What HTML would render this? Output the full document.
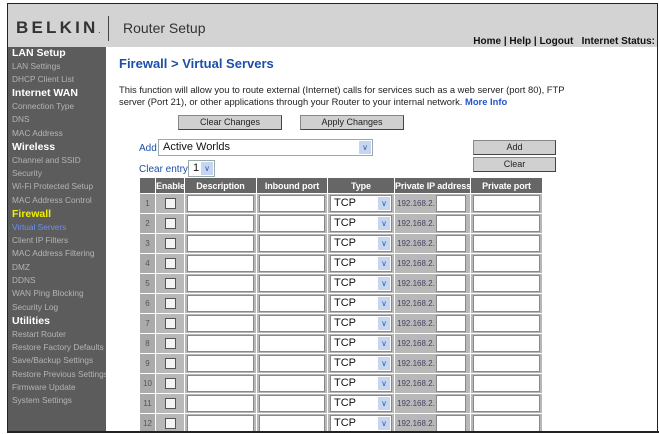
<!DOCTYPE html>
<html><head><style>
*{margin:0;padding:0;box-sizing:border-box}
body{width:659px;height:434px;background:#fff;font-family:"Liberation Sans",Arial,sans-serif;position:relative;overflow:hidden}
.frame{position:absolute;left:7px;top:3px;width:651px;height:430px;border:1px solid #222;border-bottom:2px solid #222}
.hdr{position:absolute;left:8px;top:4px;width:649px;height:43px;background:#d3d3d3}
.logo{position:absolute;left:16px;top:18px;font-size:17px;font-weight:bold;letter-spacing:3.2px;color:#333}
.vl{position:absolute;left:108px;top:16px;width:1px;height:25px;background:#444}
.rs{position:absolute;left:123px;top:20px;font-size:14px;color:#333}
.tr{position:absolute;right:4px;top:36px;font-size:10px;font-weight:bold;color:#111;white-space:nowrap}
.side{position:absolute;left:8px;top:47px;width:98px;height:385px;background:#5c5c5c;overflow:hidden}
.side div{position:absolute;left:4px;font-size:8.3px;color:#b4b4b4;white-space:nowrap}
.side .h{font-size:10.5px;font-weight:bold;color:#fff}
.side .y{color:#f0f000}
.side .b{color:#6d8ff0}
.title{position:absolute;left:119px;top:56px;font-size:13px;font-weight:bold;color:#1c4fa8}
.desc{position:absolute;left:119px;top:84px;width:540px;font-size:9.4px;line-height:12px;color:#222}
.desc a{color:#2255cc;font-weight:bold;text-decoration:none}
.btn{position:absolute;height:15px;background:#d0d0d0;border:1px solid #888;border-right-color:#444;border-bottom-color:#444;font-size:9px;text-align:center;line-height:13px;color:#222}
.lbl{position:absolute;font-size:10px;color:#1c4fa8;white-space:nowrap}
.sel{position:absolute;background:#fff;border:1px solid #9aa;font-size:11px;color:#111;padding-left:4px;line-height:15px}
.arr{position:absolute;right:1px;top:1px;width:12px;bottom:1px;background:#c6d6f0;color:#3b5fa8;font-size:8px;text-align:center;line-height:13px}
table{position:absolute;left:139px;top:177px;border-collapse:separate;border-spacing:1px;background:#fff;table-layout:fixed;width:404px}
td,th{padding:0;overflow:hidden;white-space:nowrap}
th{background:#666;color:#fff;font-size:9px;height:15px;font-weight:bold;letter-spacing:-0.1px}
td{background:#b8b8b8;height:19px;font-size:9px;color:#555;position:relative}
td.n{background:#aaa;text-align:center;color:#555;font-size:8px}
.ib{display:block;margin:0 auto;background:#fff;border:1px solid #888;height:17px}
.cb{display:block;margin:0 auto;width:11px;height:11px;border:1px solid #555;background:#f4f4f4}
.tsel{position:relative;margin-left:2px;width:62px;height:17px;background:#fff;border:1px solid #888;font-size:11px;color:#111;padding-left:3px;line-height:15px}
.ip{display:flex;align-items:center;padding-left:2px;color:#446;font-size:8px}
</style></head><body>
<div class="frame"></div>
<div class="hdr"></div>
<div class="logo">BELKIN<span style="font-size:6px;letter-spacing:0">.</span></div>
<div class="vl"></div>
<div class="rs">Router Setup</div>
<div class="tr">Home | Help | Logout &nbsp; Internet Status:</div>
<div class="side">
<div class="h" style="top:0px">LAN Setup</div>
<div style="top:14px">LAN Settings</div>
<div style="top:27px">DHCP Client List</div>
<div class="h" style="top:40px">Internet WAN</div>
<div style="top:54px">Connection Type</div>
<div style="top:67px">DNS</div>
<div style="top:81px">MAC Address</div>
<div class="h" style="top:94px">Wireless</div>
<div style="top:108px">Channel and SSID</div>
<div style="top:121px">Security</div>
<div style="top:134px">Wi-Fi Protected Setup</div>
<div style="top:148px">MAC Address Control</div>
<div class="h y" style="top:161px">Firewall</div>
<div class="b" style="top:175px">Virtual Servers</div>
<div style="top:188px">Client IP Filters</div>
<div style="top:201px">MAC Address Filtering</div>
<div style="top:215px">DMZ</div>
<div style="top:228px">DDNS</div>
<div style="top:241px">WAN Ping Blocking</div>
<div style="top:255px">Security Log</div>
<div class="h" style="top:268px">Utilities</div>
<div style="top:282px">Restart Router</div>
<div style="top:295px">Restore Factory Defaults</div>
<div style="top:308px">Save/Backup Settings</div>
<div style="top:322px">Restore Previous Settings</div>
<div style="top:335px">Firmware Update</div>
<div style="top:348px">System Settings</div>
</div>
<div class="title">Firewall &gt; Virtual Servers</div>
<div class="desc">This function will allow you to route external (Internet) calls for services such as a web server (port 80), FTP<br>server (Port 21), or other applications through your Router to your internal network. <a>More Info</a></div>
<div class="btn" style="left:178px;top:115px;width:104px">Clear Changes</div>
<div class="btn" style="left:300px;top:115px;width:104px">Apply Changes</div>
<div class="lbl" style="left:139px;top:143px">Add</div>
<div class="sel" style="left:158px;top:139px;width:215px;height:17px">Active Worlds<div class="arr">&#8744;</div></div>
<div class="lbl" style="left:139px;top:164px">Clear entry</div>
<div class="sel" style="left:188px;top:160px;width:27px;height:17px">1<div class="arr">&#8744;</div></div>
<div class="btn" style="left:473px;top:140px;width:83px">Add</div>
<div class="btn" style="left:473px;top:157px;width:83px">Clear</div>
<table>
<colgroup><col style="width:15px"><col style="width:28px"><col style="width:71px"><col style="width:70px"><col style="width:66px"><col style="width:75px"><col style="width:71px"></colgroup>
<tr><th></th><th>Enable</th><th>Description</th><th>Inbound port</th><th>Type</th><th>Private IP address</th><th>Private port</th></tr>
<tr><td class="n">1</td><td><span class="cb"></span></td><td><span class="ib" style="width:67px"></span></td><td><span class="ib" style="width:66px"></span></td><td><div class="tsel">TCP<div class="arr">&#8744;</div></div></td><td><div class="ip">192.168.2.<span class="ib" style="width:30px;margin:0 0 0 1px"></span></div></td><td><span class="ib" style="width:67px"></span></td></tr>
<tr><td class="n">2</td><td><span class="cb"></span></td><td><span class="ib" style="width:67px"></span></td><td><span class="ib" style="width:66px"></span></td><td><div class="tsel">TCP<div class="arr">&#8744;</div></div></td><td><div class="ip">192.168.2.<span class="ib" style="width:30px;margin:0 0 0 1px"></span></div></td><td><span class="ib" style="width:67px"></span></td></tr>
<tr><td class="n">3</td><td><span class="cb"></span></td><td><span class="ib" style="width:67px"></span></td><td><span class="ib" style="width:66px"></span></td><td><div class="tsel">TCP<div class="arr">&#8744;</div></div></td><td><div class="ip">192.168.2.<span class="ib" style="width:30px;margin:0 0 0 1px"></span></div></td><td><span class="ib" style="width:67px"></span></td></tr>
<tr><td class="n">4</td><td><span class="cb"></span></td><td><span class="ib" style="width:67px"></span></td><td><span class="ib" style="width:66px"></span></td><td><div class="tsel">TCP<div class="arr">&#8744;</div></div></td><td><div class="ip">192.168.2.<span class="ib" style="width:30px;margin:0 0 0 1px"></span></div></td><td><span class="ib" style="width:67px"></span></td></tr>
<tr><td class="n">5</td><td><span class="cb"></span></td><td><span class="ib" style="width:67px"></span></td><td><span class="ib" style="width:66px"></span></td><td><div class="tsel">TCP<div class="arr">&#8744;</div></div></td><td><div class="ip">192.168.2.<span class="ib" style="width:30px;margin:0 0 0 1px"></span></div></td><td><span class="ib" style="width:67px"></span></td></tr>
<tr><td class="n">6</td><td><span class="cb"></span></td><td><span class="ib" style="width:67px"></span></td><td><span class="ib" style="width:66px"></span></td><td><div class="tsel">TCP<div class="arr">&#8744;</div></div></td><td><div class="ip">192.168.2.<span class="ib" style="width:30px;margin:0 0 0 1px"></span></div></td><td><span class="ib" style="width:67px"></span></td></tr>
<tr><td class="n">7</td><td><span class="cb"></span></td><td><span class="ib" style="width:67px"></span></td><td><span class="ib" style="width:66px"></span></td><td><div class="tsel">TCP<div class="arr">&#8744;</div></div></td><td><div class="ip">192.168.2.<span class="ib" style="width:30px;margin:0 0 0 1px"></span></div></td><td><span class="ib" style="width:67px"></span></td></tr>
<tr><td class="n">8</td><td><span class="cb"></span></td><td><span class="ib" style="width:67px"></span></td><td><span class="ib" style="width:66px"></span></td><td><div class="tsel">TCP<div class="arr">&#8744;</div></div></td><td><div class="ip">192.168.2.<span class="ib" style="width:30px;margin:0 0 0 1px"></span></div></td><td><span class="ib" style="width:67px"></span></td></tr>
<tr><td class="n">9</td><td><span class="cb"></span></td><td><span class="ib" style="width:67px"></span></td><td><span class="ib" style="width:66px"></span></td><td><div class="tsel">TCP<div class="arr">&#8744;</div></div></td><td><div class="ip">192.168.2.<span class="ib" style="width:30px;margin:0 0 0 1px"></span></div></td><td><span class="ib" style="width:67px"></span></td></tr>
<tr><td class="n">10</td><td><span class="cb"></span></td><td><span class="ib" style="width:67px"></span></td><td><span class="ib" style="width:66px"></span></td><td><div class="tsel">TCP<div class="arr">&#8744;</div></div></td><td><div class="ip">192.168.2.<span class="ib" style="width:30px;margin:0 0 0 1px"></span></div></td><td><span class="ib" style="width:67px"></span></td></tr>
<tr><td class="n">11</td><td><span class="cb"></span></td><td><span class="ib" style="width:67px"></span></td><td><span class="ib" style="width:66px"></span></td><td><div class="tsel">TCP<div class="arr">&#8744;</div></div></td><td><div class="ip">192.168.2.<span class="ib" style="width:30px;margin:0 0 0 1px"></span></div></td><td><span class="ib" style="width:67px"></span></td></tr>
<tr><td class="n">12</td><td><span class="cb"></span></td><td><span class="ib" style="width:67px"></span></td><td><span class="ib" style="width:66px"></span></td><td><div class="tsel">TCP<div class="arr">&#8744;</div></div></td><td><div class="ip">192.168.2.<span class="ib" style="width:30px;margin:0 0 0 1px"></span></div></td><td><span class="ib" style="width:67px"></span></td></tr>
</table>
<div style="position:absolute;left:7px;top:431px;width:652px;height:3px;background:#fff;border-top:2px solid #222"></div>
</body></html>
